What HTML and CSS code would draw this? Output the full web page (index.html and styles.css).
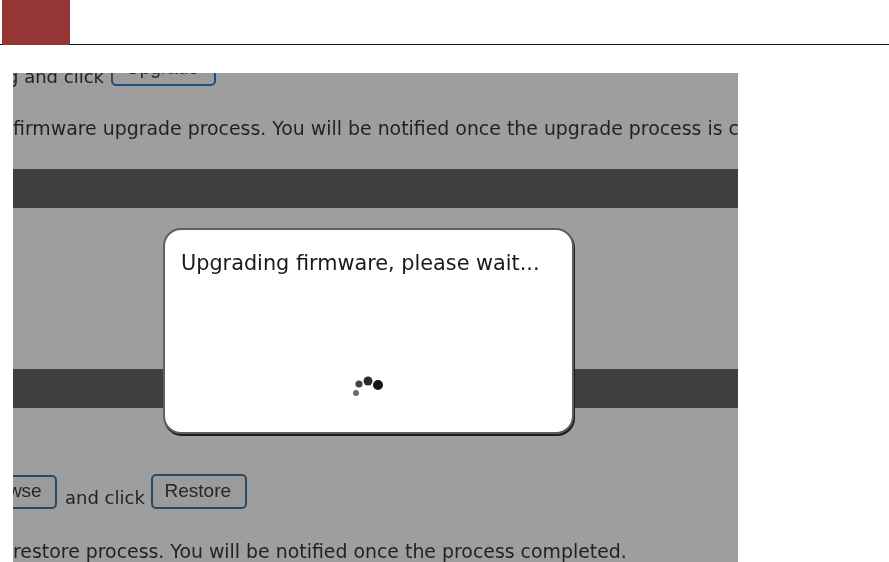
FILE: index.html
```html
<!DOCTYPE html>
<html>
<head>
    <title>Firmware upgrade</title>
    <meta charset="utf-8">
    <link rel="stylesheet" href="styles.css">
</head>
<body>
    <div class="header">
        <div class="logo"></div>
    </div>
    <div class="panel">
        <div class="row row-upgrade">
            <span class="click cut">g and click</span>
            <button class="btn btn-upgrade">Upgrade</button>
        </div>
        <p class="line line-first">firmware upgrade process. You will be notified once the upgrade process is completed.</p>
        <div class="band band-first"></div>
        <div class="band band-second"></div>
        <div class="row row-restore">
            <button class="btn btn-browse">Browse</button>
            <span class="click">and click</span>
            <button class="btn btn-restore">Restore</button>
        </div>
        <p class="line line-last">restore process. You will be notified once the process completed.</p>

        <div class="dialog">
            <div class="dialog-text">Upgrading firmware, please wait...</div>
            <svg class="spinner" width="34" height="26" viewBox="0 0 34 26">
                <circle cx="5" cy="18" r="3" fill="#6a6a6a"/>
                <circle cx="8" cy="9" r="3.600" fill="#444"/>
                <circle cx="17" cy="6" r="4.500" fill="#2a2a2a"/>
                <circle cx="27" cy="10" r="5" fill="#151515"/>
            </svg>
        </div>
    </div>
</body>
</html>
```

FILE: styles.css
```css
html, body {
    margin: 0;
    padding: 0;
    height: 100%;
    overflow: hidden;
    background: #fff;
}
body {
    font-family: "DejaVu Sans", Verdana, sans-serif;
    color: #1d2226;
}
.header {
    height: 44px;
    border-bottom: 1px solid #111;
    padding-left: 2px;
}
.logo {
    width: 68px;
    height: 45px;
    background: #943634;
}
.panel {
    position: relative;
    width: 725px;
    height: 489px;
    margin: 28px 0 0 13px;
    background: #9e9e9e;
    overflow: hidden;
    font-size: 18.900px;
}
.row {
    display: flex;
    align-items: flex-end;
    white-space: nowrap;
    filter: blur(0.3px);
}
.row-upgrade {
    height: 40px;
    margin-top: -27px;
    gap: 7px;
}
.click {
    font-size: 18px;
    line-height: 24px;
    margin: 0 6px -1px 8px;
}
.cut {
    margin: 0 0 -3px -6px;
}
.btn {
    font-family: "Liberation Sans", Arial, sans-serif;
    font-size: 19px;
    color: #23282c;
    background: #9b9b9b;
    border: 2px solid #2b4a62;
    border-radius: 5px;
    padding: 0 2px 2px 0;
    height: 34px;
}
.btn-upgrade {
    width: 105px;
    border-color: #1f4f7d;
}
.line {
    margin: 0;
    white-space: nowrap;
    line-height: 24px;
    filter: blur(0.3px);
}
.line-first {
    margin-top: 30px;
}
.band {
    height: 39px;
    background: #3f3f3f;
}
.band-first {
    margin-top: 29px;
}
.band-second {
    margin-top: 161px;
}
.row-restore {
    margin-top: 65px;
    height: 36px;
}
.btn-browse {
    width: 92px;
    margin-left: -48px;
}
.btn-restore {
    width: 96px;
    height: 35px;
}
.line-last {
    margin-top: 30px;
}
.dialog {
    position: absolute;
    left: 150px;
    top: 155px;
    width: 411px;
    height: 206px;
    box-sizing: border-box;
    background: #fff;
    border: 2px solid #5f5f5f;
    border-radius: 18px;
    box-shadow: 1px 2px 0 #1c1c1c;
    padding: 21px 16px;
}
.dialog-text {
    font-size: 20.800px;
    color: #1a1a1a;
    white-space: nowrap;
    filter: blur(0.3px);
}
.spinner {
    position: absolute;
    left: 186px;
    top: 145px;
    filter: blur(0.5px);
}
```
